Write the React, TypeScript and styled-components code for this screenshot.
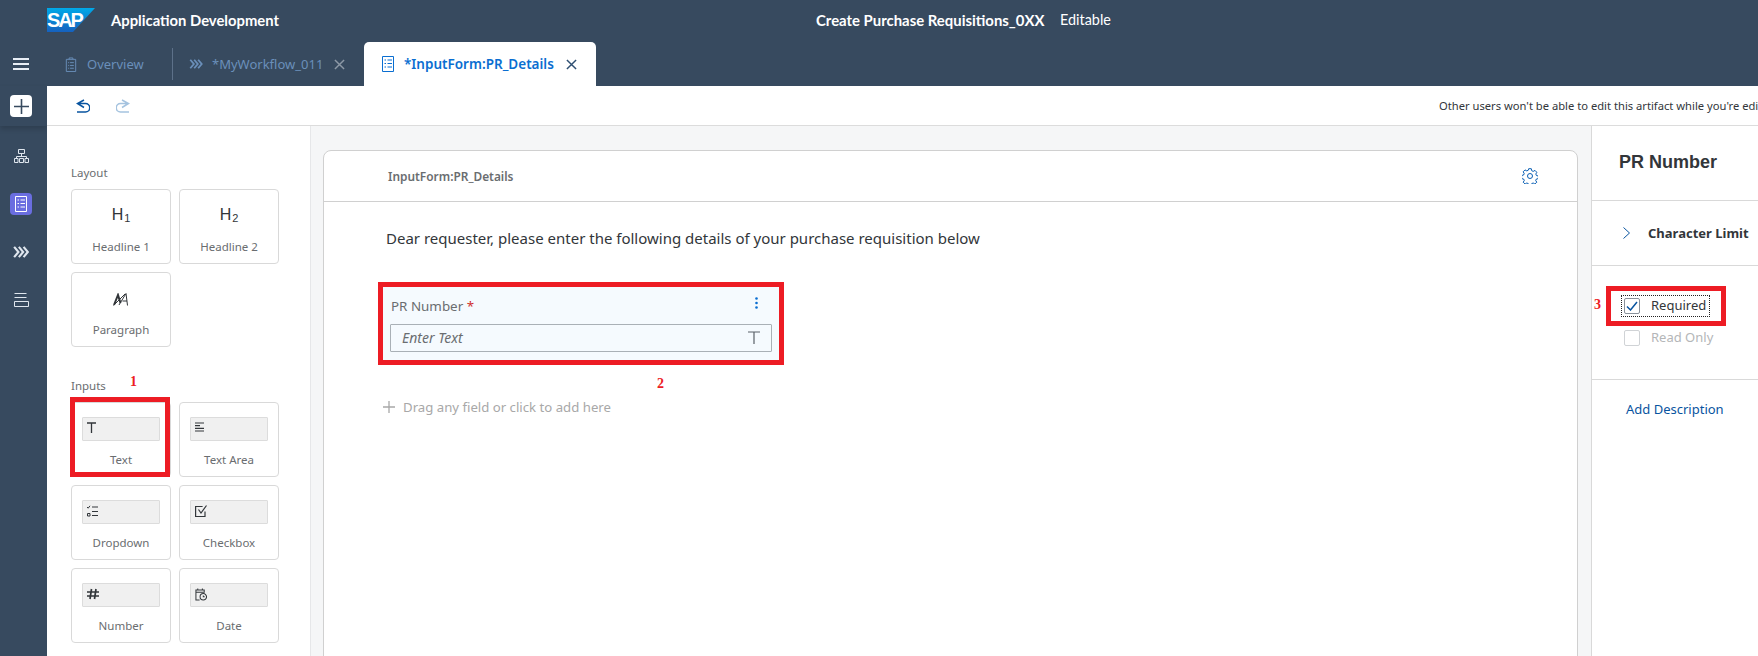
import React from "react";
import styled, { createGlobalStyle } from "styled-components";

const Global = createGlobalStyle`
  html, body { margin: 0; padding: 0; background: #fff; overflow: hidden; }
  body { font-family: "Noto Sans", "Open Sans", Arial, sans-serif; }
  * { box-sizing: border-box; }
`;

const Shell = styled.div`
  width: 1758px;
  height: 656px;
  overflow: hidden;
  display: flex;
  flex-direction: column;
  background: #fff;
`;

const TopBar = styled.header`
  height: 42px;
  flex: none;
  background: #374a5f;
  display: flex;
  align-items: flex-start;
  padding: 8px 0 0 47px;
  color: #fff;
`;
const LogoSvg = styled.svg`
  display: block;
  flex: none;
`;
const AppTitle = styled.div`
  margin-left: 16px;
  font: 700 14.8px/24px Lato, "Noto Sans", sans-serif;
  width: 168px;
  white-space: nowrap;
`;
const CenterTitle = styled.div`
  margin-left: 537px;
  font: 700 14.9px/24px Lato, "Noto Sans", sans-serif;
  width: 244px;
  white-space: nowrap;
`;
const Status = styled.div`
  font: 400 14.4px/24px Lato, "Noto Sans", sans-serif;
  white-space: nowrap;
`;

const Body = styled.div`
  flex: 1;
  display: flex;
  min-height: 0;
`;
const Rail = styled.nav`
  width: 47px;
  flex: none;
  background: #374a5f;
  display: flex;
  flex-direction: column;
  align-items: center;
  color: #e8eef5;
`;
const RailTop = styled.div`
  height: 44px;
  padding-right: 5px;
  display: flex;
  align-items: center;
  justify-content: center;
`;
const RailAdd = styled.div`
  align-self: stretch;
  height: 40px;
  padding-right: 5px;
  display: flex;
  align-items: center;
  justify-content: center;
  box-shadow: 0 3px 5px rgba(0, 0, 0, 0.16);
`;
const AddButton = styled.div`
  width: 22px;
  height: 22px;
  border-radius: 4px;
  background: #fff;
  color: #374a5f;
  display: flex;
  align-items: center;
  justify-content: center;
`;
const RailList = styled.div`
  display: flex;
  flex-direction: column;
  align-items: center;
  padding: 19px 5px 0 0;
  gap: 26px;
`;
const RailItem = styled.div<{ $active?: boolean }>`
  width: 22px;
  height: 22px;
  border-radius: 4px;
  display: flex;
  align-items: center;
  justify-content: center;
  background: ${(p) => (p.$active ? "#6a6ee0" : "transparent")};
  color: ${(p) => (p.$active ? "#fff" : "#dfe6ee")};
`;

const Main = styled.main`
  flex: 1;
  min-width: 0;
  display: flex;
  flex-direction: column;
`;
const TabBar = styled.div`
  height: 44px;
  flex: none;
  background: #374a5f;
  display: flex;
  align-items: stretch;
`;
const Tab = styled.div<{ $active?: boolean; $w: number; $pad: number; $sep?: boolean }>`
  width: ${(p) => p.$w}px;
  padding-left: ${(p) => p.$pad}px;
  display: flex;
  align-items: center;
  white-space: nowrap;
  font-size: ${(p) => (p.$active ? "13.5px" : "13px")};
  font-weight: ${(p) => (p.$active ? 600 : 400)};
  color: ${(p) => (p.$active ? "#0a6ed1" : "#6a8fba")};
  background: ${(p) => (p.$active ? "#fff" : "transparent")};
  border-radius: ${(p) => (p.$active ? "5px 5px 0 0" : "0")};
  position: relative;
  ${(p) =>
    p.$sep
      ? `&::after { content: ""; position: absolute; right: 0; top: 6px; bottom: 6px; width: 1px; background: #5d7189; }`
      : ""}
`;
const TabLabel = styled.span<{ $w: number; $gap: number }>`
  width: ${(p) => p.$w}px;
  margin-left: ${(p) => p.$gap}px;
  flex: none;
`;
const TabClose = styled.span<{ $active?: boolean }>`
  margin-left: 11px;
  display: flex;
  color: ${(p) => (p.$active ? "#2f4f72" : "#8d99a6")};
`;

const Toolbar = styled.div`
  height: 40px;
  flex: none;
  background: #fff;
  border-bottom: 1px solid #dcdcdc;
  display: flex;
  align-items: center;
  padding-left: 29px;
  white-space: nowrap;
`;
const ToolIcon = styled.span<{ $off?: boolean }>`
  display: flex;
  width: 14px;
  margin-right: 26px;
  color: ${(p) => (p.$off ? "#a5c3df" : "#0854a0")};
`;
const Notice = styled.div`
  margin-left: 1283px;
  font-size: 11.2px;
  color: #32363a;
`;

const Workspace = styled.div`
  flex: 1;
  min-height: 0;
  display: flex;
`;
const Palette = styled.aside`
  width: 263px;
  flex: none;
  background: #fff;
  padding: 39px 0 0 24px;
`;
const GroupLabel = styled.div`
  font-size: 11.5px;
  line-height: 16px;
  color: #6a6d70;
  margin-bottom: 8px;
`;
const CardGrid = styled.div`
  display: grid;
  grid-template-columns: 100px 100px;
  grid-auto-rows: 75px;
  gap: 8px;
  margin-bottom: 31px;
`;
const PaletteCard = styled.div`
  position: relative;
  border: 1px solid #d9d9d9;
  border-radius: 4px;
  padding-top: 14px;
  display: flex;
  flex-direction: column;
  align-items: center;
`;
const Preview = styled.div`
  width: 78px;
  height: 24px;
  display: flex;
  align-items: center;
  justify-content: center;
  color: #32363a;
`;
const Heading = styled.span`
  font: 400 16px/20px "Liberation Sans", Arial, sans-serif;
  color: #32363a;
  margin-top: -3px;
  sub {
    font-size: 11px;
    line-height: 0;
    vertical-align: -2px;
    margin-left: 1px;
  }
`;
const InputPreview = styled.div`
  width: 78px;
  height: 24px;
  background: #f0f0f0;
  border: 1px solid #dcdcdc;
  border-radius: 1px;
  display: flex;
  align-items: flex-start;
  padding: 4px 0 0 4px;
  color: #32363a;
`;
const CardLabel = styled.div`
  margin-top: 11px;
  font-size: 11.5px;
  line-height: 16px;
  color: #6a6d70;
`;

const CardMarker = styled.div`
  position: absolute;
  left: -2px;
  top: -6px;
  width: 100px;
  height: 80px;
  border: 5px solid #ed1c24;
`;
const Note = styled.span<{ $x: number; $y: number }>`
  position: absolute;
  left: ${(p) => p.$x}px;
  top: ${(p) => p.$y}px;
  font: 700 14px/14px "Liberation Serif", "Times New Roman", serif;
  color: #ed1c24;
`;

const Canvas = styled.section`
  flex: 1;
  min-width: 0;
  background: #f5f6f7;
  border-left: 1px solid #e6e7e9;
  padding: 24px 13px 0 12px;
  overflow: hidden;
`;
const FormCard = styled.div`
  height: 560px;
  background: #fff;
  border: 1px solid #d0d0d0;
  border-radius: 8px 8px 0 0;
`;
const FormHeader = styled.div`
  height: 51px;
  border-bottom: 1px solid #d0d0d0;
  display: flex;
  align-items: center;
  justify-content: space-between;
  padding: 0 39px 0 64px;
`;
const FormTitle = styled.div`
  font-size: 11.9px;
  font-weight: 600;
  color: #6a6d70;
`;
const GearIcon = styled.span`
  display: flex;
  color: #0a5fb4;
`;
const FormBody = styled.div`
  padding: 26px 0 0 54px;
`;
const Intro = styled.div`
  padding-left: 8px;
  font-size: 15px;
  line-height: 20px;
  color: #32363a;
  margin-bottom: 34px;
  white-space: nowrap;
`;
const Field = styled.div`
  position: relative;
  width: 406px;
  height: 83px;
  border: 5px solid #ed1c24;
  background: #f5fafe;
  padding: 11px 7px 8px;
`;
const FieldHead = styled.div`
  display: flex;
  justify-content: space-between;
  align-items: center;
  height: 16px;
  margin-bottom: 10px;
  padding: 0 14px 0 1px;
`;
const FieldName = styled.div`
  font-size: 13.4px;
  line-height: 16px;
  color: #6a6d70;
  span {
    color: #d0312d;
  }
`;
const Kebab = styled.span`
  display: flex;
  color: #0a6ed1;
  margin-top: -6px;
`;
const FieldInput = styled.div`
  height: 28px;
  border: 1px solid #a9b0b6;
  border-radius: 1px;
  display: flex;
  align-items: center;
  justify-content: space-between;
  padding: 0 11px 2px;
  font-size: 14px;
  font-style: italic;
  color: #6a6d70;
`;
const FieldType = styled.span`
  display: flex;
  color: #5a6168;
`;
const AddRow = styled.div`
  margin: 34px 0 0 5px;
  display: flex;
  align-items: center;
  gap: 8px;
  font-size: 13.2px;
  line-height: 16px;
  color: #a8a8a8;
`;

const Inspector = styled.aside`
  width: 167px;
  flex: none;
  background: #fff;
  border-left: 1px solid #d9d9d9;
  white-space: nowrap;
  overflow: hidden;
`;
const InspectHead = styled.div`
  height: 75px;
  border-bottom: 1px solid #d9d9d9;
  padding: 23px 0 0 27px;
  font: 700 18px/26px "Liberation Sans", Arial, sans-serif;
  color: #32363a;
`;
const InspectRow = styled.div`
  height: 65px;
  border-bottom: 1px solid #d9d9d9;
  display: flex;
  align-items: center;
  padding: 0 0 1px 31px;
  font-size: 13px;
  font-weight: 700;
  color: #32363a;
  gap: 18px;
`;
const Chevron = styled.span`
  display: flex;
  color: #0854a0;
`;
const InspectChecks = styled.div`
  position: relative;
  height: 114px;
  border-bottom: 1px solid #d9d9d9;
  padding: 20px 0 0 14px;
`;
const RequiredFrame = styled.div`
  width: 120px;
  height: 40px;
  border: 5px solid #ed1c24;
  padding: 4px 0 0 10px;
`;
const FocusRing = styled.div`
  width: 89px;
  height: 22px;
  border: 1px dotted #222;
  display: flex;
  align-items: center;
  padding-left: 2px;
`;
const Box = styled.span<{ $off?: boolean }>`
  width: 16px;
  height: 16px;
  flex: none;
  border: 1px solid ${(p) => (p.$off ? "#d0d3d6" : "#89919a")};
  border-radius: 2px;
  display: flex;
  align-items: center;
  justify-content: center;
  color: #0854a0;
  background: #fff;
`;
const CheckText = styled.span<{ $off?: boolean }>`
  margin: -2px 0 0 11px;
  font-size: 13px;
  color: ${(p) => (p.$off ? "#b4b6b8" : "#32363a")};
`;
const ReadOnlyRow = styled.div`
  display: flex;
  align-items: center;
  margin: 4px 0 0 18px;
`;
const AddLink = styled.div`
  padding: 20px 0 0 34px;
  font-size: 13px;
  line-height: 18px;
  color: #0854a0;
`;

const Svg = styled.svg`
  display: block;
  fill: none;
  stroke: currentColor;
  flex: none;
`;

type P = { w?: number; h?: number; sw?: number; d: string; vb: string };
const Ico = ({ w = 16, h = 16, sw = 1, d, vb }: P) => (
  <Svg width={w} height={h} viewBox={vb} strokeWidth={sw}>
    <path d={d} />
  </Svg>
);

const SapLogo = () => (
  <LogoSvg width="48" height="24" viewBox="0 0 48 24">
    <defs>
      <linearGradient id="sapg" x1="0" y1="0" x2="0" y2="1">
        <stop offset="0" stopColor="#00a9e8" />
        <stop offset="1" stopColor="#1661be" />
      </linearGradient>
    </defs>
    <polygon points="0,0 48,0 26,24 0,24" fill="url(#sapg)" />
    <text x="0" y="19" fontFamily="'Liberation Sans', Arial, sans-serif" fontWeight="700" fontSize="20" letterSpacing="-2.2" fill="#fff">
      SAP
    </text>
  </LogoSvg>
);

const ParagraphIcon = () => (
  <Svg width="16" height="13" viewBox="0 0 16 13">
    <path d="M1 12L5 2l2.500 8" strokeWidth="2" />
    <path d="M0.500 12.500L12 1" strokeWidth="1" />
    <path d="M6 12L13 .5l1.500 12M9.500 8h4.500" strokeWidth="1" />
  </Svg>
);

const triple = "M1 1l5 6-5 6M6.500 1l5 6-5 6M12 1l5 6-5 6";
const formDoc = "M.5.5h11v15H.5zM2.500 4h1.500M5.500 4h4.500M2.500 7.500h1.500M5.500 7.500h4.500M2.500 11h1.500M5.500 11h4.500";
const xMark = "M1 1l10 10M11 1L1 11";

export default function App() {
  return (
    <Shell>
      <Global />
      <TopBar>
        <SapLogo />
        <AppTitle>Application Development</AppTitle>
        <CenterTitle>Create Purchase Requisitions_0XX</CenterTitle>
        <Status>Editable</Status>
      </TopBar>
      <Body>
        <Rail>
          <RailTop>
            <Ico w={16} h={14} sw={2} vb="0 0 16 14" d="M0 2h16M0 7h16M0 12h16" />
          </RailTop>
          <RailAdd>
            <AddButton>
              <Ico w={15} h={15} sw={1.6} vb="0 0 15 15" d="M7.500 0v15M0 7.500h15" />
            </AddButton>
          </RailAdd>
          <RailList>
            <RailItem>
              <Ico w={15} h={14} vb="0 0 15 14" d="M4.500.5h6v4h-6zM7.500 4.500v3M2.500 9.500v-2h10v2M.5 9.500h3.500v4H.5zM5.500 9.500h4v4h-4zM11 9.500h3.500v4H11z" />
            </RailItem>
            <RailItem $active>
              <Ico w={12} h={16} vb="0 0 12 16" d={formDoc} />
            </RailItem>
            <RailItem>
              <Ico w={16} h={12} sw={2.5} vb="0 0 18 14" d={triple} />
            </RailItem>
            <RailItem>
              <Ico w={15} h={14} vb="0 0 15 14" d="M.5 .5h12M.5 4.500h12M.5 8.500h14v5H.5z" />
            </RailItem>
          </RailList>
        </Rail>
        <Main>
          <TabBar>
            <Tab $w={126} $pad={18} $sep>
              <Ico w={12} h={15} vb="0 0 12 16" d="M1 2.500h10v13H1zM4 2.500V1h4v1.500M3 6h1M5 6h4M3 9h1M5 9h4M3 12h1M5 12h4" />
              <TabLabel $w={60} $gap={10}>Overview</TabLabel>
            </Tab>
            <Tab $w={191} $pad={16}>
              <Ico w={14} h={10} sw={2.5} vb="0 0 18 14" d={triple} />
              <TabLabel $w={111} $gap={9}>*MyWorkflow_011</TabLabel>
              <TabClose>
                <Ico w={11} h={11} sw={1.6} vb="0 0 12 12" d={xMark} />
              </TabClose>
            </Tab>
            <Tab $w={232} $pad={18} $active>
              <Ico w={12} h={16} vb="0 0 12 16" d={formDoc} />
              <TabLabel $w={151} $gap={10}>*InputForm:PR_Details</TabLabel>
              <TabClose $active>
                <Ico w={11} h={11} sw={1.6} vb="0 0 12 12" d={xMark} />
              </TabClose>
            </Tab>
          </TabBar>
          <Toolbar>
            <ToolIcon>
              <Ico w={14} h={14} sw={1.5} vb="0 0 14 14" d="M8 1L1.500 4.500 8 8.500M1.500 4.500H9.500a4.250 4.250 0 0 1 0 8.500H1" />
            </ToolIcon>
            <ToolIcon $off>
              <Ico w={14} h={14} sw={1.5} vb="0 0 14 14" d="M6 1l6.500 3.500L6 8.500M12.500 4.500H4.500a4.250 4.250 0 0 0 0 8.500H13" />
            </ToolIcon>
            <Notice>Other users won't be able to edit this artifact while you're editing it.</Notice>
          </Toolbar>
          <Workspace>
            <Palette>
              <GroupLabel>Layout</GroupLabel>
              <CardGrid>
                <PaletteCard>
                  <Preview><Heading>H<sub>1</sub></Heading></Preview>
                  <CardLabel>Headline 1</CardLabel>
                </PaletteCard>
                <PaletteCard>
                  <Preview><Heading>H<sub>2</sub></Heading></Preview>
                  <CardLabel>Headline 2</CardLabel>
                </PaletteCard>
                <PaletteCard>
                  <Preview>
                    <ParagraphIcon />
                  </Preview>
                  <CardLabel>Paragraph</CardLabel>
                </PaletteCard>
              </CardGrid>
              <GroupLabel>Inputs</GroupLabel>
              <CardGrid>
                <PaletteCard>
                  <InputPreview>
                    <Ico w={9} h={11} sw={1.3} vb="0 0 9 11" d="M0 1h9M4.500 1v10" />
                  </InputPreview>
                  <CardLabel>Text</CardLabel>
                  <CardMarker />
                  <Note $x={58} $y={-28}>1</Note>
                </PaletteCard>
                <PaletteCard>
                  <InputPreview>
                    <Ico w={9} h={10} sw={1.2} vb="0 0 9 10" d="M0 1h9M0 3.700h5M0 6.300h9M0 9h9" />
                  </InputPreview>
                  <CardLabel>Text Area</CardLabel>
                </PaletteCard>
                <PaletteCard>
                  <InputPreview>
                    <Ico w={11} h={12} vb="0 0 11 12" d="M0 2l1.200 1.200L3 .8M5 2h6M5 6.500h6M5 10.500h6M.5 8.500h2.500V11H.5z" />
                  </InputPreview>
                  <CardLabel>Dropdown</CardLabel>
                </PaletteCard>
                <PaletteCard>
                  <InputPreview>
                    <Ico w={12} h={12} sw={1.2} vb="0 0 12 12" d="M10 6.500v5H.6V1.500h7M3.500 4.500l2.500 3.500L11.500 .5" />
                  </InputPreview>
                  <CardLabel>Checkbox</CardLabel>
                </PaletteCard>
                <PaletteCard>
                  <InputPreview>
                    <Ico w={12} h={12} sw={1.7} vb="0 0 12 12" d="M4.500 1L3 11M9 1L7.500 11M0 4h12M0 8h12" />
                  </InputPreview>
                  <CardLabel>Number</CardLabel>
                </PaletteCard>
                <PaletteCard>
                  <InputPreview>
                    <Ico w={12} h={13} sw={1.1} vb="0 0 13 14" d="M5 13H1V2h9v3M1 4.500h9M3 .5v2M8 .5v2M12.500 9.500a3.500 3.500 0 1 1-7 0 3.500 3.500 0 0 1 7 0zM9 8v1.500h1.500" />
                  </InputPreview>
                  <CardLabel>Date</CardLabel>
                </PaletteCard>
              </CardGrid>
            </Palette>
            <Canvas>
              <FormCard>
                <FormHeader>
                  <FormTitle>InputForm:PR_Details</FormTitle>
                  <GearIcon>
                    <Ico w={16} h={16} vb="0 0 16 16" d="M6.700.7h2.600l.4 2 1.500.7 1.800-1 1.800 1.900-1 1.700.6 1.500 2 .5v2.600l-2 .4-.7 1.500 1.100 1.700-1.900 1.800-1.700-1-1.500.6-.5 1.900H6.700l-.4-1.900-1.500-.6-1.700 1-1.900-1.800 1.100-1.700-.7-1.500-2-.4V7.500l2-.5.6-1.500-1-1.700 1.800-1.900 1.800 1 1.500-.7zM10.500 8a2.500 2.500 0 1 1-5 0 2.500 2.500 0 0 1 5 0z" />
                  </GearIcon>
                </FormHeader>
                <FormBody>
                  <Intro>Dear requester, please enter the following details of your purchase requisition below</Intro>
                  <Field>
                    <FieldHead>
                      <FieldName>PR Number <span>*</span></FieldName>
                      <Kebab>
                        <svg width="3" height="12" viewBox="0 0 3 12" fill="currentColor">
                          <circle cx="1.500" cy="1.500" r="1.300" />
                          <circle cx="1.500" cy="6" r="1.300" />
                          <circle cx="1.500" cy="10.500" r="1.300" />
                        </svg>
                      </Kebab>
                    </FieldHead>
                    <FieldInput>
                      Enter Text
                      <FieldType>
                        <Ico w={12} h={13} sw={1.2} vb="0 0 12 13" d="M0 1h12M6 1v12" />
                      </FieldType>
                    </FieldInput>
                    <Note $x={274} $y={90}>2</Note>
                  </Field>
                  <AddRow>
                    <Ico w={12} h={12} sw={1.3} vb="0 0 12 12" d="M6 0v12M0 6h12" />
                    Drag any field or click to add here
                  </AddRow>
                </FormBody>
              </FormCard>
            </Canvas>
            <Inspector>
              <InspectHead>PR Number</InspectHead>
              <InspectRow>
                <Chevron>
                  <Ico w={7} h={12} vb="0 0 7 12" d="M.5.5L6.500 6 .5 11.500" />
                </Chevron>
                Character Limit
              </InspectRow>
              <InspectChecks>
                <Note $x={2} $y={32}>3</Note>
                <RequiredFrame>
                  <FocusRing>
                    <Box>
                      <Ico w={12} h={10} sw={1.5} vb="0 0 12 10" d="M1 5.500l3.500 3.500L11 1" />
                    </Box>
                    <CheckText>Required</CheckText>
                  </FocusRing>
                </RequiredFrame>
                <ReadOnlyRow>
                  <Box $off />
                  <CheckText $off>Read Only</CheckText>
                </ReadOnlyRow>
              </InspectChecks>
              <AddLink>Add Description</AddLink>
            </Inspector>
          </Workspace>
        </Main>
      </Body>
    </Shell>
  );
}
